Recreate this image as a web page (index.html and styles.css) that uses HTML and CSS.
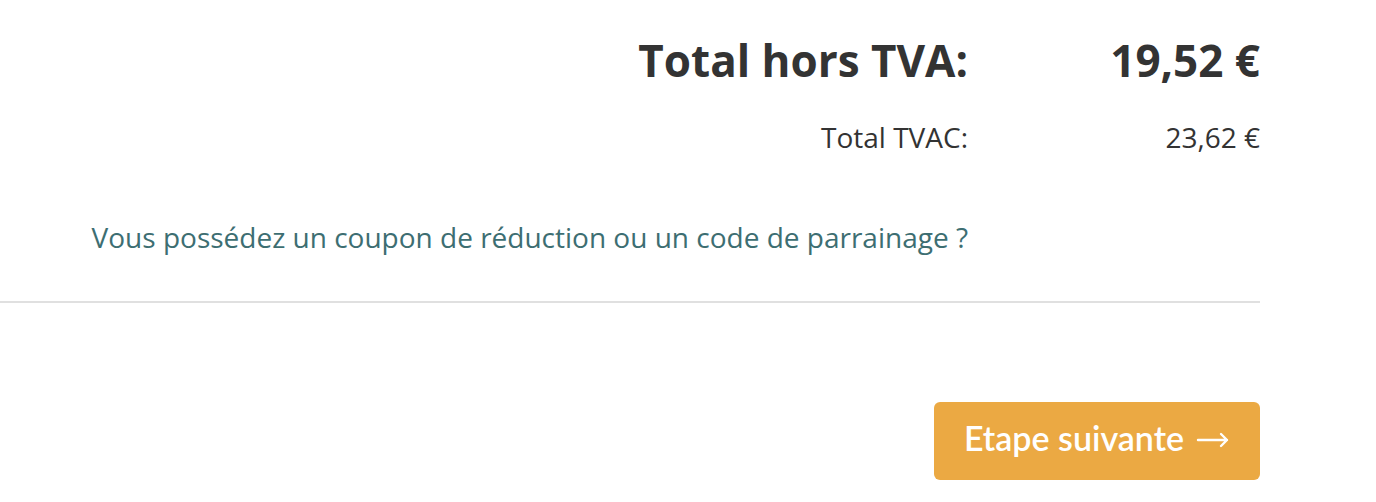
FILE: index.html
```html
<!DOCTYPE html>
<html lang="fr">
<head>
  <meta charset="UTF-8" />
  <meta name="viewport" content="width=device-width, initial-scale=1" />
  <title>Panier</title>
  <link rel="stylesheet" href="styles.css">
</head>
<body>
  <div class="cart-summary">
    <div class="totals">
      <div class="total-row total-main">
        <span class="total-label">Total hors TVA:</span>
        <span class="total-value">19,52 €</span>
      </div>
      <div class="total-row total-sub">
        <span class="total-label">Total TVAC:</span>
        <span class="total-value">23,62 €</span>
      </div>
      <div class="coupon">
        <a href="#" class="coupon-link">Vous possédez un coupon de réduction ou un code de parrainage ?</a>
      </div>
    </div>
    <div class="actions">
      <button class="btn-next">
        Etape suivante
        <svg class="btn-arrow" width="34" height="16" viewBox="0 0 34 16" fill="none" stroke="#fff" stroke-width="2.4" stroke-linecap="round" stroke-linejoin="round">
          <path d="M2 8h29M25 2l6 6-6 6"/>
        </svg>
      </button>
    </div>
  </div>
</body>
</html>
```

FILE: styles.css
```css
body {
  font-family: 'Open Sans', sans-serif;
  background-color: #fff;
  color: #333;
  margin: 0;
  padding: 0;
}
.cart-summary {
  width: 1260px;
}
.totals {
  border-bottom: 2px solid #e0e0e0;
  padding: 30px 0 40px;
}
.total-row {
  display: flex;
  justify-content: flex-end;
  align-items: baseline;
}
.total-label {
  text-align: right;
  padding-right: 10px;
}
.total-value {
  width: 282px;
  text-align: right;
}
.total-main {
  font-size: 44px;
  font-weight: 700;
  color: #333;
  line-height: 60px;
}
.total-sub {
  font-size: 28px;
  color: #333;
  margin-top: 28px;
  line-height: 38px;
}
.coupon {
  margin-top: 62px;
  padding-right: 292px;
  text-align: right;
  line-height: 38px;
}
.coupon-link {
  font-size: 28px;
  color: #3d6e72;
  text-decoration: none;
}
.actions {
  display: flex;
  justify-content: flex-end;
  padding-top: 99px;
}
.btn-next {
  display: flex;
  align-items: center;
  justify-content: center;
  gap: 12px;
  font-family: 'Lato', sans-serif;
  font-size: 34px;
  font-weight: 600;
  color: #fff;
  background-color: #eba943;
  border: none;
  border-radius: 6px;
  width: 326px;
  height: 78px;
  padding: 0 0 8px;
  cursor: pointer;
}
.btn-arrow {
  margin-top: 6px;
}
```
